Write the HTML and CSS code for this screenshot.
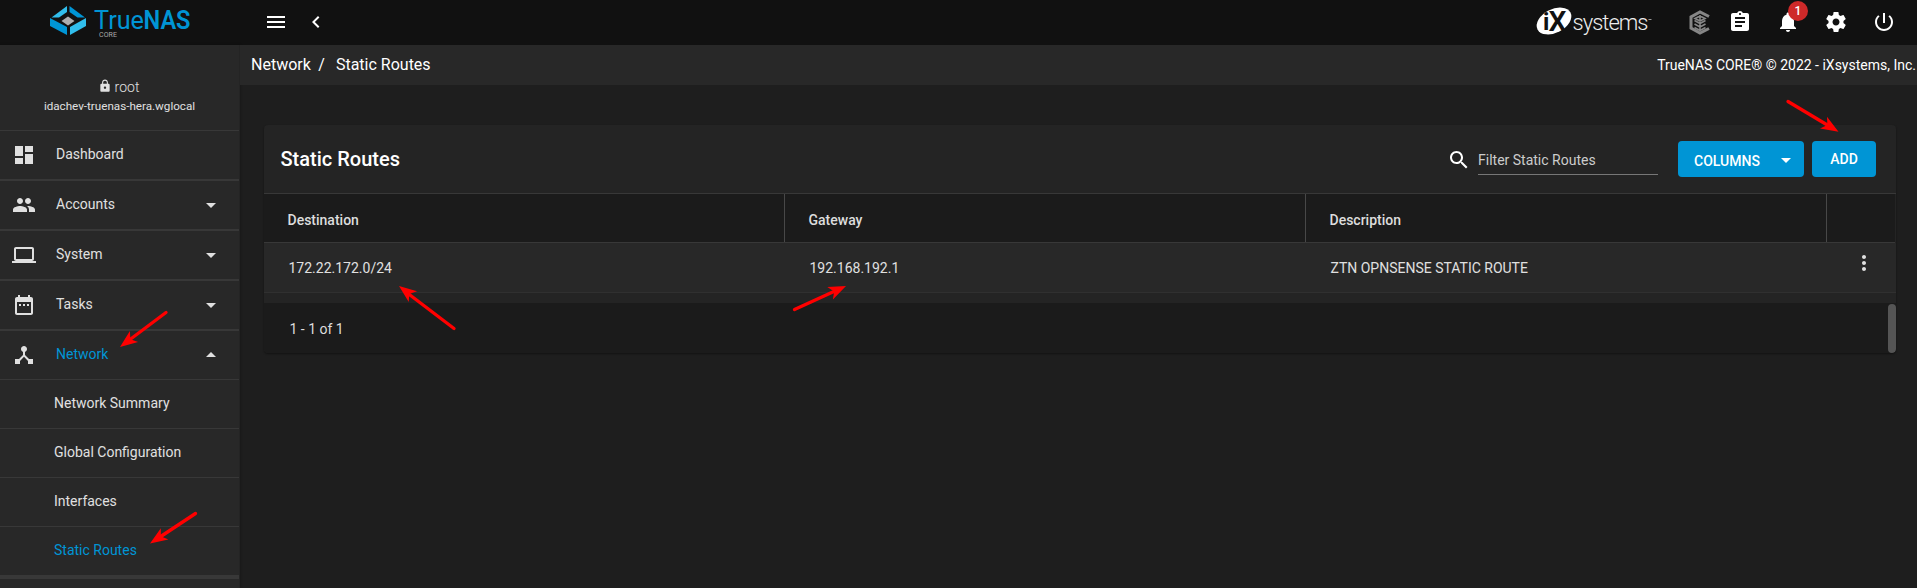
FILE: index.html
```html
<!DOCTYPE html>
<html lang="en">
<head>
<meta charset="utf-8">
<title>TrueNAS - Static Routes</title>
<link rel="stylesheet" href="styles.css">
</head>
<body>
<header class="topbar">
  <div class="brand">
    <svg class="brand-logo" width="240" height="45" viewBox="0 0 240 45">
      <g fill="#31beec"><path d="M67 6v6l-8 5.500h-7.500z"/><path d="M70 35v-8l16-9v8z"/></g>
      <g fill="#0095d5"><path d="M69.500 6v6l8 5.500h7.500z"/><path d="M67 35v-8l-17-9v8z"/></g>
      <path d="M68 16.500l6.500 4.500-6.500 4.500-6.500-4.500z" fill="#aeadae"/>
      <text class="logo-true" x="94" y="28.500" textLength="50" lengthAdjust="spacingAndGlyphs">True</text>
      <text class="logo-nas" x="143.500" y="28.500" textLength="47" lengthAdjust="spacingAndGlyphs">NAS</text>
      <text class="logo-core" x="99" y="37" textLength="18">CORE</text>
    </svg>
  </div>
  <div class="top-left">
    <svg class="icon menu" viewBox="0 0 24 24"><path d="M3 18h18v-2H3v2zm0-5h18v-2H3v2zm0-7v2h18V6H3z"/></svg>
    <svg class="icon chevron" viewBox="0 0 24 24"><path d="M15.410 7.410L14 6l-6 6 6 6 1.410-1.410L10.830 12z"/></svg>
  </div>
  <div class="top-right">
    <svg class="ix" width="130" height="45" viewBox="0 0 130 45">
      <ellipse cx="24" cy="21" rx="18.500" ry="11.800" transform="rotate(-27 24 21)" fill="#fff"/>
      <text class="ix-i" x="13" y="29.500">i</text>
      <text class="ix-x" x="18.500" y="31" textLength="18" lengthAdjust="spacingAndGlyphs">X</text>
      <text class="ix-word" x="42.500" y="29.500" textLength="76">systems</text>
      <path d="M118.500 19.500h3" stroke="#999"/>
    </svg>
    <svg class="truecommand" width="24" height="26" viewBox="0 0 24 26"><g fill="none" stroke="#868686"><path d="M21 7.500L12 3 3 8v11l9 5 9-4.500" stroke-width="3"/><path d="M12 6v16M12 14.500l5.500-3M12 18l5.500-3M12 14.500l-5.500-3M12 18l-5.500-3M12 21.500l5.500-3M12 21.500l-5.500-3M7 9.500l5-2.500 5 2.500-5 2.500z" stroke-width="1.600"/></g></svg>
    <svg class="icon clip" viewBox="0 0 24 24"><path d="M19 3h-4.180C14.400 1.840 13.300 1 12 1c-1.300 0-2.400.84-2.820 2H5c-1.100 0-2 .9-2 2v14c0 1.100.9 2 2 2h14c1.100 0 2-.9 2-2V5c0-1.100-.9-2-2-2zm-7 0c.55 0 1 .45 1 1s-.45 1-1 1-1-.45-1-1 .45-1 1-1zm2 14H7v-2h7v2zm3-4H7v-2h10v2zm0-4H7V7h10v2z"/></svg>
    <div class="bell">
      <svg class="icon" viewBox="0 0 24 24"><path d="M12 22c1.100 0 2-.9 2-2h-4c0 1.100.89 2 2 2zm6-6v-5c0-3.070-1.640-5.640-4.500-6.320V4c0-.83-.67-1.500-1.500-1.500s-1.500.67-1.500 1.500v.68C7.630 5.360 6 7.920 6 11v5l-2 2v1h16v-1l-2-2z"/></svg>
      <span class="badge">1</span>
    </div>
    <svg class="icon gear" viewBox="0 0 24 24"><path d="M19.430 12.980c.04-.32.07-.64.07-.98s-.03-.66-.07-.98l2.110-1.650c.19-.15.24-.42.12-.64l-2-3.460c-.12-.22-.39-.3-.61-.22l-2.490 1c-.52-.4-1.080-.73-1.690-.98l-.38-2.650C14.460 2.180 14.250 2 14 2h-4c-.25 0-.46.18-.49.42l-.38 2.650c-.61.25-1.170.59-1.690.98l-2.490-1c-.23-.09-.49 0-.61.22l-2 3.460c-.13.22-.07.49.12.64l2.110 1.650c-.04.32-.07.65-.07.98s.03.66.07.98l-2.110 1.650c-.19.15-.24.42-.12.64l2 3.460c.12.22.39.3.61.22l2.490-1c.52.4 1.080.73 1.690.98l.38 2.650c.03.24.24.42.49.42h4c.25 0 .46-.18.49-.42l.38-2.650c.61-.25 1.170-.59 1.690-.98l2.490 1c.23.09.49 0 .61-.22l2-3.460c.12-.22.07-.49-.12-.64l-2.110-1.650zM12 15.500c-1.930 0-3.500-1.570-3.500-3.500s1.570-3.500 3.500-3.500 3.500 1.570 3.500 3.500-1.570 3.500-3.500 3.500z"/></svg>
    <svg class="icon power" viewBox="0 0 24 24"><path d="M13 3h-2v10h2V3zm4.830 2.170l-1.420 1.420C17.990 7.860 19 9.810 19 12c0 3.870-3.130 7-7 7s-7-3.130-7-7c0-2.190 1.010-4.140 2.580-5.420L6.170 5.170C4.230 6.820 3 9.260 3 12c0 4.970 4.030 9 9 9s9-4.030 9-9c0-2.740-1.230-5.180-3.170-6.830z"/></svg>
  </div>
</header>
<div class="shell">
  <nav class="sidebar">
    <div class="user">
      <div class="user-name"><svg class="lock" viewBox="0 0 24 24"><path d="M18 8h-1V6c0-2.760-2.240-5-5-5S7 3.240 7 6v2H6c-1.100 0-2 .9-2 2v10c0 1.100.9 2 2 2h12c1.100 0 2-.9 2-2V10c0-1.100-.9-2-2-2zm-6 9c-1.100 0-2-.9-2-2s.9-2 2-2 2 .9 2 2-.9 2-2 2zm3.100-9H8.900V6c0-1.710 1.390-3.100 3.100-3.100 1.710 0 3.100 1.390 3.100 3.100v2z"/></svg><span>root</span></div>
      <div class="user-host">idachev-truenas-hera.wglocal</div>
    </div>
    <a class="item"><svg class="icon" viewBox="0 0 24 24"><path d="M3 13h8V3H3v10zm0 8h8v-6H3v6zm10 0h8V11h-8v10zm0-18v6h8V3h-8z"/></svg><span>Dashboard</span></a>
    <a class="item"><svg class="icon" viewBox="0 0 24 24"><path d="M16 11c1.660 0 2.990-1.340 2.990-3S17.660 5 16 5c-1.660 0-3 1.340-3 3s1.340 3 3 3zm-8 0c1.660 0 2.990-1.340 2.990-3S9.660 5 8 5C6.340 5 5 6.340 5 8s1.340 3 3 3zm0 2c-2.330 0-7 1.170-7 3.500V19h14v-2.500c0-2.330-4.670-3.500-7-3.500zm8 0c-.29 0-.62.02-.97.05 1.160.84 1.970 1.970 1.970 3.450V19h6v-2.500c0-2.330-4.670-3.500-7-3.500z"/></svg><span>Accounts</span><i class="caret"></i></a>
    <a class="item"><svg class="icon" viewBox="0 0 24 24"><path d="M20 18c1.100 0 1.990-.9 1.990-2L22 6c0-1.100-.9-2-2-2H4c-1.100 0-2 .9-2 2v10c0 1.100.9 2 2 2H0v2h24v-2h-4zM4 6h16v10H4V6z"/></svg><span>System</span><i class="caret"></i></a>
    <a class="item"><svg class="icon" viewBox="0 0 24 24"><path d="M9 11H7v2h2v-2zm4 0h-2v2h2v-2zm4 0h-2v2h2v-2zm2-7h-1V2h-2v2H8V2H6v2H5c-1.110 0-1.990.9-1.990 2L3 20c0 1.100.89 2 2 2h14c1.100 0 2-.9 2-2V6c0-1.100-.9-2-2-2zm0 16H5V9h14v11z"/></svg><span>Tasks</span><i class="caret"></i></a>
    <a class="item open"><svg class="icon" viewBox="0 0 24 24"><path d="M17 16l-4-4V8.820C14.160 8.400 15 7.300 15 6c0-1.660-1.340-3-3-3S9 4.340 9 6c0 1.300.84 2.400 2 2.820V12l-4 4H3v5h5v-3.050l4-4.200 4 4.200V21h5v-5h-4z"/></svg><span>Network</span><i class="caret up"></i></a>
    <a class="sub">Network Summary</a>
    <a class="sub">Global Configuration</a>
    <a class="sub">Interfaces</a>
    <a class="sub active">Static Routes</a>
  </nav>
  <main class="main">
    <div class="crumbs">
      <div class="trail"><span>Network</span><span class="sep">/</span><span>Static Routes</span></div>
      <div class="copyright">TrueNAS CORE® © 2022 - iXsystems, Inc.</div>
    </div>
    <section class="card">
      <div class="card-head">
        <h1>Static Routes</h1>
        <svg class="icon search" viewBox="0 0 24 24"><path d="M15.500 14h-.79l-.28-.27C15.410 12.590 16 11.110 16 9.500 16 5.910 13.090 3 9.500 3S3 5.910 3 9.500 5.910 16 9.500 16c1.610 0 3.090-.59 4.230-1.570l.27.28v.79l5 4.990L20.490 19l-4.990-5zm-6 0C7.010 14 5 11.990 5 9.500S7.010 5 9.500 5 14 7.010 14 9.500 11.990 14 9.500 14z"/></svg>
        <div class="filter">Filter Static Routes</div>
        <button class="btn columns">COLUMNS<i class="caret"></i></button>
        <button class="btn add">ADD</button>
      </div>
      <div class="grid thead"><div>Destination</div><div>Gateway</div><div>Description</div><div></div></div>
      <div class="grid row"><div>172.22.172.0/24</div><div>192.168.192.1</div><div>ZTN OPNSENSE STATIC ROUTE</div><div><svg class="icon dots" viewBox="0 0 24 24"><path d="M12 8c1.100 0 2-.9 2-2s-.9-2-2-2-2 .9-2 2 .9 2 2 2zm0 2c-1.100 0-2 .9-2 2s.9 2 2 2 2-.9 2-2-.9-2-2-2zm0 6c-1.100 0-2 .9-2 2s.9 2 2 2 2-.9 2-2-.9-2-2-2z"/></svg></div></div>
      <div class="foot"><span>1 - 1 of 1</span><i class="thumb"></i></div>
    </section>
  </main>
</div>
<svg class="arrows" viewBox="0 0 1917 588">
  <g stroke="#f00" stroke-width="3.300" stroke-linecap="round" fill="none">
    <path d="M166 312.500L130 339.500"/><path d="M195.500 513.500L160 537"/><path d="M454 328.500L408 293.500"/><path d="M794.500 309.500L835 291"/><path d="M1788 101.500L1829 126"/>
  </g>
  <g fill="#f00">
    <path transform="translate(120 347) rotate(143)" d="M0 0L-17.500 -6.800 -13 0 -17.500 6.800z"/>
    <path transform="translate(150 543.500) rotate(146.500)" d="M0 0L-17.500 -6.800 -13 0 -17.500 6.800z"/>
    <path transform="translate(399 286) rotate(-142.500)" d="M0 0L-17.500 -6.800 -13 0 -17.500 6.800z"/>
    <path transform="translate(846 286) rotate(-24.500)" d="M0 0L-17.500 -6.800 -13 0 -17.500 6.800z"/>
    <path transform="translate(1838.500 131.700) rotate(31)" d="M0 0L-17.500 -6.800 -13 0 -17.500 6.800z"/>
  </g>
</svg>
</body>
</html>
```
FILE: styles.css
```css
* { box-sizing: border-box; }
body {
  margin: 0;
  height: 588px;
  overflow: hidden;
  background: #1e1e1e;
  color: #fff;
  font-family: Roboto, "Liberation Sans", sans-serif;
  font-size: 14px;
}
.icon { width: 24px; height: 24px; fill: currentColor; flex: none; display: block; }
.caret { border: 5px solid transparent; border-top-color: currentColor; border-bottom: 0; width: 0; height: 0; }
.caret.up { border-top: 0; border-bottom: 5px solid currentColor; }

.topbar { display: flex; height: 45px; background: #111; }
.brand { width: 240px; }
.brand-logo, .ix { display: block; overflow: visible; }
.logo-true, .logo-nas { font-size: 26px; fill: #0095d5; }
.logo-nas { font-weight: 600; }
.logo-core { font-size: 7px; fill: #aaa; }
.top-left { display: flex; align-items: center; padding: 0 0 1px 24px; gap: 16px; }
.top-right { display: flex; margin-left: auto; padding-right: 21px; }
.top-right .icon { margin-top: 10px; }
.ix-i { font-size: 24px; font-weight: 700; fill: #111; }
.ix-x { font-size: 28px; font-weight: 600; fill: #111; }
.ix-word { font-size: 22px; font-weight: 300; fill: #eee; }
.truecommand { margin: 9px 0 0 28px; }
.clip { margin-left: 16px; }
.bell { position: relative; margin-left: 24px; }
.badge {
  position: absolute; left: 12px; top: 1px; width: 20px; height: 20px;
  border-radius: 50%; background: #ce2929; font-size: 12px; font-weight: 500;
  line-height: 20px; text-align: center;
}
.gear, .power { margin-left: 24px; }

.shell { display: flex; height: 543px; }
.sidebar { width: 240px; background: #282828; color: #e0e0e0; border-right: 1px solid #242424; box-shadow: 0 0 3px rgba(0,0,0,.3); }
.user { height: 86px; border-bottom: 1px solid #383838; padding-top: 34px; text-align: center; }
.user-name { display: flex; justify-content: center; align-items: center; gap: 3px; line-height: 16px; font-weight: 300; padding-right: 2px; }
.lock { width: 14px; height: 14px; fill: #e0e0e0; margin-top: -3px; }
.user-host { font-size: 11.650px; line-height: 16px; margin-top: 3px; }
.item { display: flex; align-items: center; height: 50px; border-bottom: 2px solid #383838; padding: 0 17px 0 12px; }
.item span { margin: 0 auto 2px 20px; }
.item.open { height: 49px; border-bottom-width: 1px; }
.item.open span { color: #0095d5; }
.item .caret { margin: 1px 6px 0; }
.item .caret.up { margin: 0 6px 1px; }
.sub { display: block; height: 49px; line-height: 46px; padding-left: 54px; border-bottom: 1px solid #383838; }
.sub.active { color: #0095d5; border-bottom-width: 4px; height: 52px; }

.main { flex: 1; }
.crumbs { display: flex; justify-content: space-between; height: 40px; padding: 0 1px 0 11px; background: #282828; line-height: 39px; }
.copyright { line-height: 40px; }
.trail { display: flex; font-size: 16px; }
.sep { margin: 0 11px 0 7.500px; }
.card { margin: 40px 21px 0 24px; height: 228px; background: #242424; border-radius: 4px; box-shadow: 0 1px 2px rgba(0,0,0,.4); overflow: hidden; }
.card-head { display: flex; align-items: center; height: 69px; padding: 0 20px 0 16.500px; border-bottom: 1px solid #383838; }
h1 { margin: 0 auto 0 0; font-size: 20px; font-weight: 500; }
.filter { width: 180px; height: 32px; line-height: 34px; margin: 0 20px 0 7px; border-bottom: 1px solid #777; color: #ccc; }
.search { margin-top: 1px; }
.btn { border: 0; border-radius: 4px; height: 36px; background: #0095d5; color: #fff; font: 500 14px Roboto, sans-serif; padding: 0; }
.columns { display: flex; align-items: center; justify-content: space-between; width: 126px; padding: 3px 13px 0 16px; margin-right: 8px; }
.add { width: 64px; }
.grid { display: grid; grid-template-columns: 521px 521px 521px 1fr; }
.thead { height: 49px; background: #1b1b1b; border-bottom: 1px solid #383838; color: #ddd; font-weight: 500; line-height: 52px; margin-right: 1px; }
.thead div { height: 48px; padding-left: 23.500px; border-right: 1px solid #484848; }
.thead div:last-child { border: 0; }
.row { height: 50px; line-height: 50px; background: #282828; border-bottom: 1px solid #303030; color: #e0e0e0; }
.row div { padding-left: 24.500px; }
.dots { margin-top: 8px; }
.foot { display: flex; justify-content: space-between; height: 50px; margin-top: 10px; padding-left: 25.500px; line-height: 52px; background: #1b1b1b; color: #ddd; }
.thumb { width: 8px; margin-top: 1px; border-radius: 4px; background: #555; }

.arrows { position: absolute; left: 0; top: 0; width: 1917px; height: 588px; pointer-events: none; }
```
